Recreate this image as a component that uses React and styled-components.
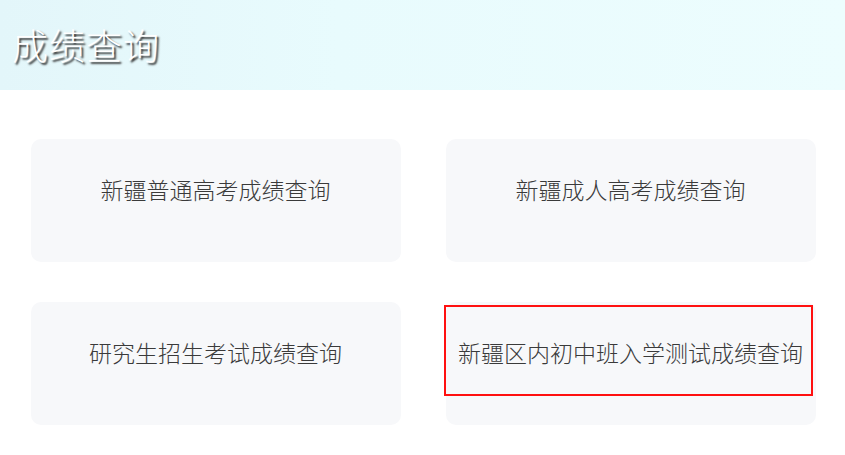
import React from "react";
import styled, { createGlobalStyle } from "styled-components";

const GlobalStyle = createGlobalStyle`
  body {
    margin: 0;
    background: #fff;
    font-family: "Noto Sans CJK SC", "Noto Sans", sans-serif;
  }
`;

const Page = styled.div`
  width: 845px;
  height: 455px;
  overflow: hidden;
  background: #fff;
`;

const Header = styled.header`
  height: 90px;
  display: flex;
  align-items: center;
  padding-left: 12px;
  padding-bottom: 3px;
  box-sizing: border-box;
  background: linear-gradient(90deg, #e3f6fa 0%, #e8fbfd 40%, #edfdfe 100%);
`;

const Title = styled.h1`
  margin: 0;
  font-size: 36px;
  font-weight: 300;
  letter-spacing: 1px;
  color: #fff;
  text-shadow: 2px 2px 2px #2e2e2e;
  line-height: 1;
`;

const Grid = styled.div`
  display: grid;
  grid-template-columns: 370px 370px;
  grid-auto-rows: 123px;
  column-gap: 45px;
  row-gap: 40px;
  padding: 49px 0 0 31px;
`;

const Card = styled.div`
  display: flex;
  flex-direction: column;
  border-radius: 10px;
  background: #f7f8fa;
`;

const CardLink = styled.a`
  height: 91px;
  margin: 3px 3px 0 -2px;
  box-sizing: border-box;
  border: 2px solid ${(p) => (p.$active ? "#ff1010" : "transparent")};
  display: flex;
  align-items: center;
  justify-content: center;
  padding: 2px 0 0 4px;
  font-size: 23px;
  font-weight: 300;
  color: #3a3a3a;
  text-decoration: none;
  cursor: pointer;
`;

const items = [
  "新疆普通高考成绩查询",
  "新疆成人高考成绩查询",
  "研究生招生考试成绩查询",
  "新疆区内初中班入学测试成绩查询",
];

export default function App() {
  return (
    <Page>
      <GlobalStyle />
      <Header>
        <Title>成绩查询</Title>
      </Header>
      <Grid>
        {items.map((t, i) => (
          <Card key={t}>
            <CardLink $active={i === 3}>{t}</CardLink>
          </Card>
        ))}
      </Grid>
    </Page>
  );
}
